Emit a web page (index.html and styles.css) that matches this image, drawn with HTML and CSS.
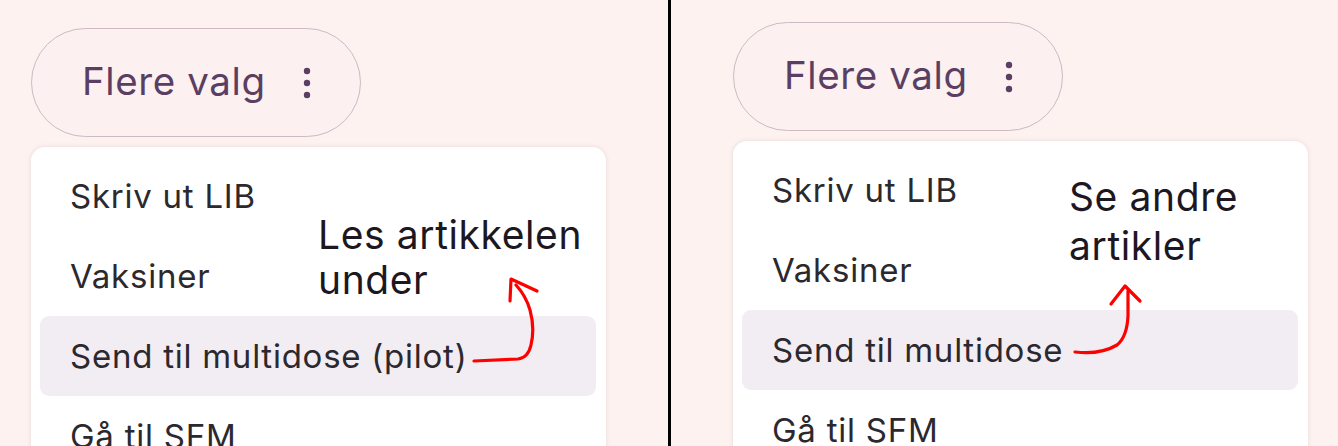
FILE: index.html
```html
<!DOCTYPE html>
<html lang="no">
<head>
<meta charset="utf-8">
<title>Flere valg</title>
<link rel="stylesheet" href="styles.css">
</head>
<body>
<div class="page">
  <section class="panel panel-left">
    <button class="more-btn" type="button">
      <span class="more-label">Flere valg</span>
      <svg class="kebab" width="8" height="32" viewBox="0 0 8 32" aria-hidden="true">
        <circle cx="4" cy="4" r="3.2"/>
        <circle cx="4" cy="16" r="3.2"/>
        <circle cx="4" cy="28" r="3.2"/>
      </svg>
    </button>
    <ul class="menu">
      <li class="menu-item">Skriv ut LIB</li>
      <li class="menu-item">Vaksiner</li>
      <li class="menu-item is-active">Send til multidose (pilot)</li>
      <li class="menu-item">Gå til SFM</li>
    </ul>
    <p class="note note-left">Les artikkelen<br>under</p>
    <svg class="arrow" width="668" height="446" viewBox="0 0 668 446" aria-hidden="true">
      <path d="M474 361 L518 359 Q528 358 531 345 Q535 328 530 310 Q526 296 516 285"/>
      <path d="M510 301 L511 279 L537 291"/>
    </svg>
  </section>
  <div class="divider"></div>
  <section class="panel panel-right">
    <button class="more-btn" type="button">
      <span class="more-label">Flere valg</span>
      <svg class="kebab" width="8" height="32" viewBox="0 0 8 32" aria-hidden="true">
        <circle cx="4" cy="4" r="3.2"/>
        <circle cx="4" cy="16" r="3.2"/>
        <circle cx="4" cy="28" r="3.2"/>
      </svg>
    </button>
    <ul class="menu">
      <li class="menu-item">Skriv ut LIB</li>
      <li class="menu-item">Vaksiner</li>
      <li class="menu-item is-active">Send til multidose</li>
      <li class="menu-item">Gå til SFM</li>
    </ul>
    <p class="note note-right">Se andre<br>artikler</p>
    <svg class="arrow" width="667" height="446" viewBox="671 0 667 446" aria-hidden="true">
      <path d="M1075 352 Q1100 355 1117 345 Q1127 337 1128 316 L1128 291"/>
      <path d="M1111 304 L1125 286 L1140 301"/>
    </svg>
  </section>
</div>
</body>
</html>
```
FILE: styles.css
```css
* { box-sizing: border-box; }

html, body {
  margin: 0;
  padding: 0;
  background: #fdf2f0;
  font-family: Inter, "Noto Sans", "Liberation Sans", sans-serif;
}

.page {
  display: flex;
  width: 1338px;
  height: 446px;
  overflow: hidden;
}

.panel {
  position: relative;
  display: flex;
  flex-direction: column;
  align-items: flex-start;
  gap: 10px;
  height: 446px;
  overflow: hidden;
  flex: none;
}

.panel-left {
  width: 668px;
  padding: 28px 0 0 31px;
}

.panel-right {
  width: 667px;
  padding: 22px 0 0 62px;
}

.divider {
  width: 3px;
  height: 446px;
  background: #000;
  flex: none;
}

.more-btn {
  flex: none;
  display: flex;
  align-items: center;
  gap: 37px;
  width: 330px;
  height: 109px;
  padding: 0 0 0 50px;
  border: 1.5px solid #cdbac3;
  border-radius: 55px;
  background: #fdf0f0;
  color: #5a3f63;
  font-family: inherit;
  font-size: 38.5px;
  font-weight: 400;
  letter-spacing: 0.6px;
  cursor: pointer;
}

.more-label {
  line-height: 1;
  padding-bottom: 2px;
}

.kebab {
  fill: #5a3f63;
  flex: none;
}

.menu {
  list-style: none;
  margin: 0;
  width: 575px;
  padding: 9px 10px 0 9px;
  background: #fff;
  border-radius: 14px;
  box-shadow: 0 0 4px rgba(140, 100, 110, 0.18);
  flex: none;
}

.menu-item {
  height: 80px;
  line-height: 80px;
  padding-left: 30px;
  font-size: 33px;
  letter-spacing: 0.75px;
  color: #2b292e;
  border-radius: 9px;
  white-space: nowrap;
}

.menu-item.is-active {
  background: #f2edf3;
}

.note {
  position: absolute;
  margin: 0;
  font-size: 39px;
  letter-spacing: 0.6px;
  color: #1d1722;
  white-space: nowrap;
}

.note-left {
  left: 318px;
  top: 212px;
  line-height: 45px;
}

.note-right {
  left: 398px;
  top: 172px;
  line-height: 49px;
}

.arrow {
  position: absolute;
  left: 0;
  top: 0;
  fill: none;
  stroke: #ff0000;
  stroke-width: 3.2;
  stroke-linecap: round;
  stroke-linejoin: round;
  pointer-events: none;
}
```
